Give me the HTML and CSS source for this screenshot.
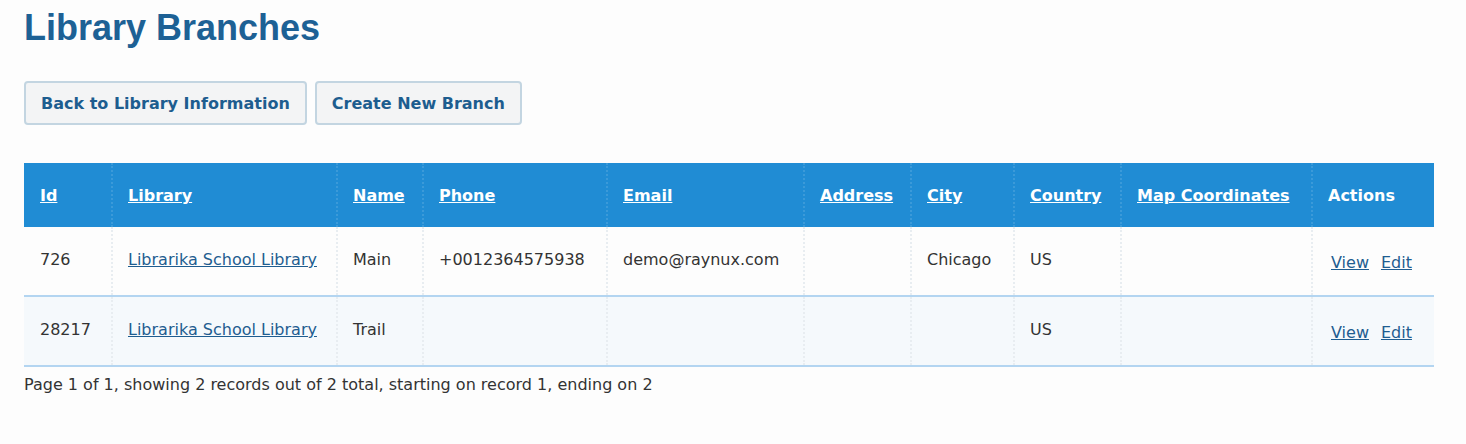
FILE: index.html
```html
<!DOCTYPE html>
<html lang="en">
<head>
<meta charset="utf-8">
<title>Library Branches</title>
<link rel="stylesheet" href="styles.css">
</head>
<body>
<div class="page">
  <h1 class="title">Library Branches</h1>
  <div class="actions-bar">
    <a class="btn" href="#">Back to Library Information</a>
    <a class="btn" href="#">Create New Branch</a>
  </div>
  <table class="grid">
    <colgroup>
      <col class="c-id"><col class="c-lib"><col class="c-name"><col class="c-phone"><col class="c-email">
      <col class="c-addr"><col class="c-city"><col class="c-country"><col class="c-map"><col class="c-act">
    </colgroup>
    <thead>
      <tr>
        <th><a href="#">Id</a></th>
        <th><a href="#">Library</a></th>
        <th><a href="#">Name</a></th>
        <th><a href="#">Phone</a></th>
        <th><a href="#">Email</a></th>
        <th><a href="#">Address</a></th>
        <th><a href="#">City</a></th>
        <th><a href="#">Country</a></th>
        <th><a href="#">Map Coordinates</a></th>
        <th>Actions</th>
      </tr>
    </thead>
    <tbody>
      <tr>
        <td>726</td>
        <td><a href="#">Librarika School Library</a></td>
        <td>Main</td>
        <td>+0012364575938</td>
        <td>demo@raynux.com</td>
        <td></td>
        <td>Chicago</td>
        <td>US</td>
        <td></td>
        <td class="row-actions"><a href="#">View</a><a href="#">Edit</a></td>
      </tr>
      <tr class="alt">
        <td>28217</td>
        <td><a href="#">Librarika School Library</a></td>
        <td>Trail</td>
        <td></td>
        <td></td>
        <td></td>
        <td></td>
        <td>US</td>
        <td></td>
        <td class="row-actions"><a href="#">View</a><a href="#">Edit</a></td>
      </tr>
    </tbody>
  </table>
  <p class="paging">Page 1 of 1, showing 2 records out of 2 total, starting on record 1, ending on 2</p>
</div>
</body>
</html>
```
FILE: styles.css
```css
html, body {
  margin: 0;
  padding: 0;
  background: #fdfdfd;
}
body {
  font-family: "DejaVu Sans", Verdana, sans-serif;
  font-size: 16px;
  color: #333;
}
.page {
  padding: 0 32px 0 24px;
}
.title {
  margin: 0;
  padding-top: 6px;
  font-family: "Liberation Sans", Arial, sans-serif;
  font-size: 36px;
  line-height: 44px;
  font-weight: bold;
  color: #1d6195;
}
.actions-bar {
  display: flex;
  gap: 8px;
  margin-top: 31px;
}
.btn {
  display: inline-block;
  height: 44px;
  box-sizing: border-box;
  padding: 0 15px;
  line-height: 41px;
  border: 2px solid #c3d5e1;
  border-radius: 4px;
  background: #f3f4f5;
  color: #1d5d8f;
  font-weight: bold;
  text-decoration: none;
}
.grid {
  margin-top: 38px;
  width: 1410px;
  table-layout: fixed;
  border-collapse: collapse;
}
.c-id { width: 88px; }
.c-lib { width: 225px; }
.c-name { width: 86px; }
.c-phone { width: 184px; }
.c-email { width: 197px; }
.c-addr { width: 107px; }
.c-city { width: 103px; }
.c-country { width: 107px; }
.c-map { width: 191px; }
.c-act { width: 122px; }
.grid th {
  background: #208cd4;
  color: #fff;
  font-weight: bold;
  text-align: left;
  padding: 23px 15px 21px;
  line-height: 20px;
  border-left: 2px dotted rgba(255,255,255,0.12);
}
.grid th:first-child, .grid td:first-child { border-left: none; }
.grid th:first-child, .grid td:first-child { padding-left: 16px; }
.grid th a {
  color: #fff;
}
.grid td {
  padding: 23px 15px 25px;
  line-height: 20px;
  border-left: 2px dotted #e8edf1;
  border-bottom: 2px solid #b3d5f1;
  background: #fdfdfd;
  vertical-align: middle;
  white-space: nowrap;
}
.grid tr.alt td {
  background: #f5f9fc;
}
.grid td a {
  color: #1f5d90;
}
.grid td.row-actions {
  padding: 26px 15px 22px 18px;
}
.row-actions a {
  margin-right: 12px;
}
.paging {
  margin: 7px 0 0;
  line-height: 22px;
}
```
